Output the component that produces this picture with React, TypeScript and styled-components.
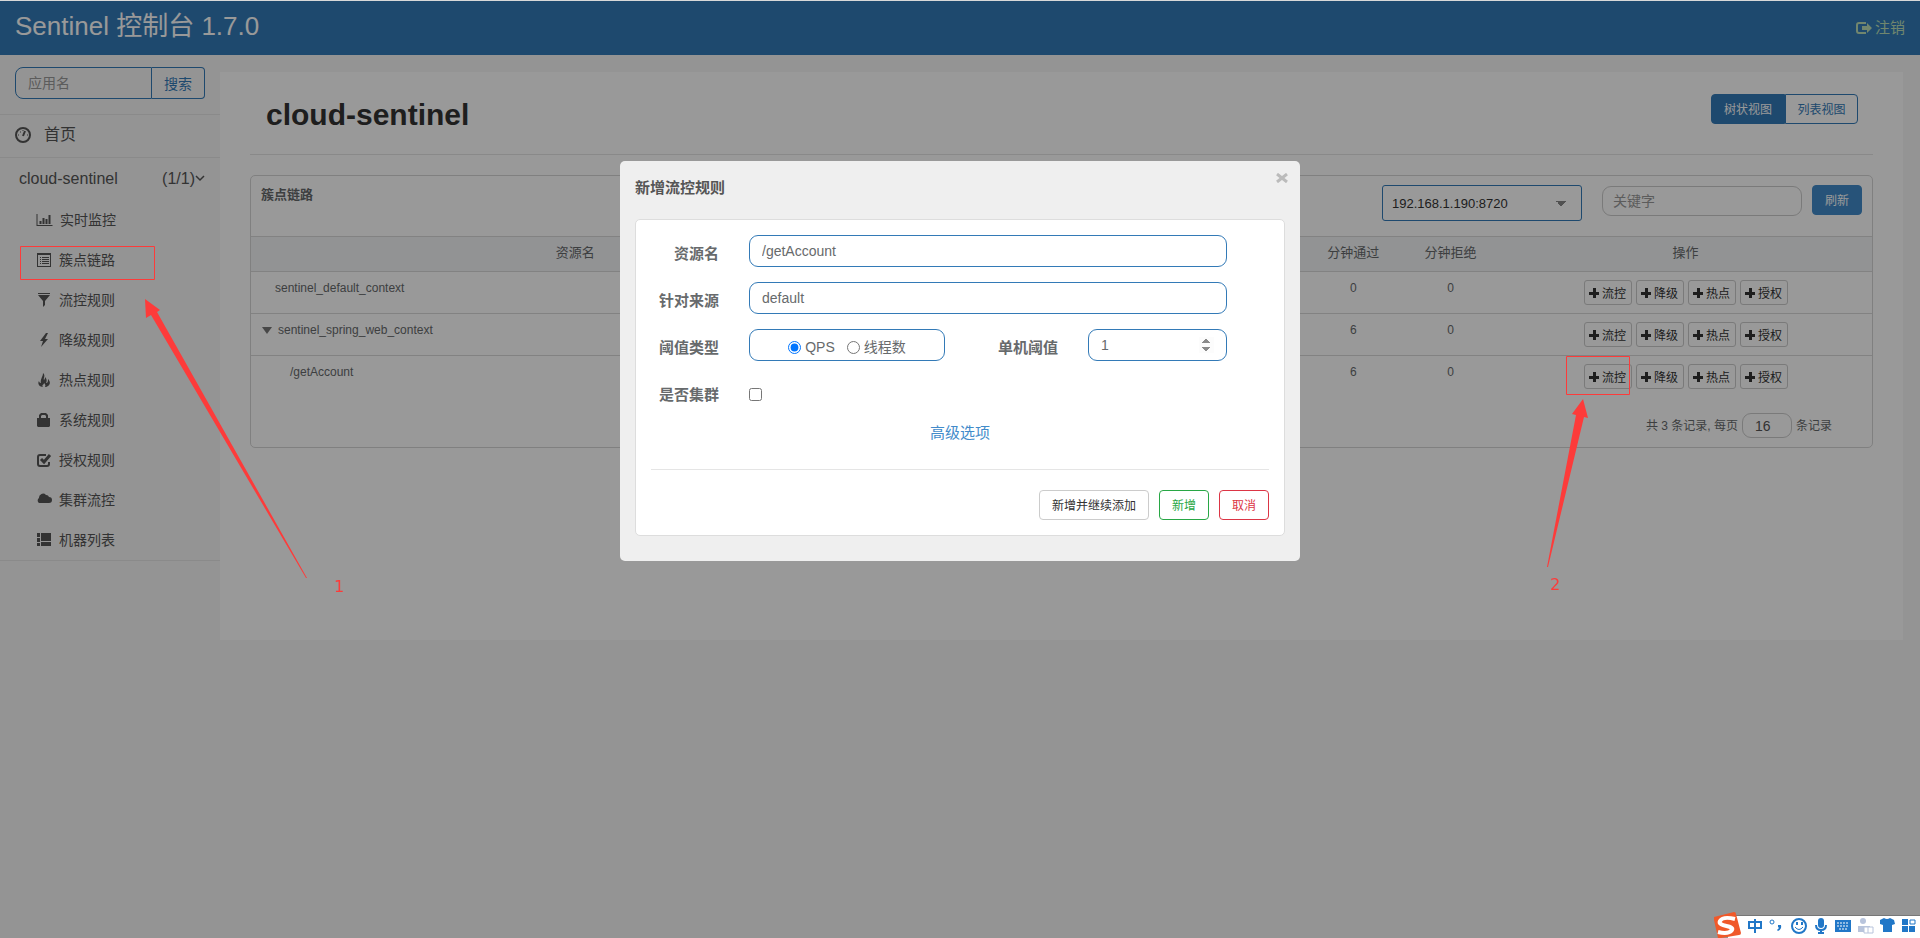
import React from 'react';
import styled, { createGlobalStyle } from 'styled-components';

const sans = `"Liberation Sans", "Noto Sans CJK SC", sans-serif`;

const GlobalStyle = createGlobalStyle`
  *, *::before, *::after { box-sizing: border-box; }
  html, body { height: 100%; }
  body { margin: 0; background: #f7f7f7; color: #676a6c; font: 14px/20px ${sans}; }
  #root { min-height: 100%; }
  button, input, select { font-family: inherit; margin: 0; }
  a { text-decoration: none; }
`;

const Page = styled.div`
  min-height: 100vh;
  border-top: 1px solid #d8d8d8;
`;

const TopBar = styled.header`
  display: flex;
  align-items: center;
  justify-content: space-between;
  height: 54px;
  padding: 0 15px;
  background: #337ab7;
`;

const Brand = styled.a`
  color: #fff;
  font-size: 26px;
  line-height: 50px;
  padding-bottom: 4px;
`;

const Logout = styled.a`
  display: flex;
  align-items: center;
  gap: 3px;
  color: #bce0b8;
  font-size: 15px;
`;

const Body = styled.div`
  display: flex;
  align-items: flex-start;
`;

const Sidebar = styled.nav`
  flex: none;
  width: 220px;
`;

const SideTop = styled.form`
  display: flex;
  height: 59px;
  padding: 12px 15px 15px;
`;

const SearchInput = styled.input`
  flex: 1;
  min-width: 0;
  height: 32px;
  padding: 0 12px;
  border: 1px solid #337ab7;
  border-radius: 8px 0 0 8px;
  background: transparent;
  font-size: 14px;
  &::placeholder { color: #999; }
`;

const SearchButton = styled.button`
  width: 53px;
  height: 32px;
  padding: 0;
  border: 1px solid #337ab7;
  border-left: 0;
  border-radius: 0 4px 4px 0;
  background: transparent;
  color: #337ab7;
  font-size: 14px;
`;

const HomeLink = styled.a`
  display: flex;
  align-items: center;
  gap: 12px;
  height: 43px;
  padding: 0 14px 2px;
  border-top: 1px solid #e7e7e7;
  color: #555;
  font-size: 16px;
`;

const AppLink = styled.a`
  display: flex;
  align-items: center;
  height: 43px;
  padding: 0 15px 0 19px;
  border-top: 1px solid #e7e7e7;
  color: #555;
  font-size: 16px;
  span { flex: 1; }
`;

const SubMenu = styled.ul`
  list-style: none;
  margin: 0;
  padding: 0;
  border-bottom: 1px solid #e7e7e7;
`;

const SubLink = styled.a`
  display: flex;
  align-items: center;
  gap: 6px;
  height: 40px;
  padding-left: 36px;
  color: #555;
  font-size: 14px;
  svg { flex: none; }
`;

const Content = styled.main`
  flex: 1;
  min-width: 0;
  min-height: 568px;
  margin: 17px 17px 0 0;
  padding: 0 30px;
  background: #fff;
`;

const TitleRow = styled.div`
  display: flex;
  justify-content: space-between;
  align-items: flex-start;
  height: 83px;
  padding: 22px 15px 0 16px;
  border-bottom: 1px solid #e4e4e4;
`;

const Title = styled.h1`
  margin: 0;
  color: #333;
  font-size: 30px;
  line-height: 42px;
`;

const ViewSwitch = styled.div`
  display: flex;
`;

const ViewButton = styled.button<{ $active?: boolean }>`
  width: ${p => (p.$active ? 74 : 73)}px;
  height: 30px;
  padding: 0 0 2px;
  border: 1px solid #337ab7;
  border-radius: ${p => (p.$active ? '4px 0 0 4px' : '0 4px 4px 0')};
  background: ${p => (p.$active ? '#337ab7' : '#fff')};
  color: ${p => (p.$active ? '#fff' : '#337ab7')};
  font-size: 12px;
`;

const Card = styled.section`
  margin-top: 20px;
  border: 1px solid #d6d6d6;
  border-radius: 5px;
`;

const CardHead = styled.div`
  display: flex;
  height: 60px;
  padding: 9px 10px 0;
`;

const CardTitle = styled.strong`
  flex: 1;
  color: #676a6c;
  font-size: 13px;
  line-height: 20px;
`;

const MachineSelect = styled.select`
  appearance: none;
  width: 200px;
  height: 36px;
  padding: 0 9px;
  border: 1px solid #337ab7;
  border-radius: 3px;
  color: #333;
  font-size: 13px;
  background: linear-gradient(to bottom left, #888 50%, transparent 50%) 173px 15px / 5px 5px no-repeat,
    linear-gradient(to bottom right, #888 50%, transparent 50%) 178px 15px / 5px 5px no-repeat, #fff;
`;

const KeyInput = styled.input`
  width: 200px;
  height: 30px;
  margin: 1px 10px 0 20px;
  padding: 0 10px;
  border: 1px solid #ccc;
  border-radius: 9px;
  font-size: 14px;
  &::placeholder { color: #999; }
`;

const Refresh = styled.button`
  width: 50px;
  height: 30px;
  padding: 0 0 2px;
  border: 1px solid #428bca;
  border-radius: 4px;
  background: #428bca;
  color: #fff;
  font-size: 12px;
`;

const Table = styled.table`
  width: 100%;
  table-layout: fixed;
  border-collapse: collapse;
  font-size: 12px;
  th {
    height: 35px;
    padding: 0 0 2px;
    border-top: 1px solid #d9d9d9;
    background: #f3f5f7;
    font-size: 13px;
    font-weight: 400;
    text-align: center;
  }
  td {
    height: 42px;
    padding: 6px 0 0;
    border-top: 1px solid #d9d9d9;
    text-align: center;
    vertical-align: top;
  }
`;

const NameCell = styled.td<{ $indent: number }>`
  && { text-align: left; padding-left: ${p => p.$indent}px; }
`;

const Caret = styled.span`
  display: inline-block;
  margin: 0 6px 0 -16px;
  border: 5px solid transparent;
  border-top: 7px solid #777;
  border-bottom: 0;
`;

const Actions = styled.div`
  display: flex;
  justify-content: center;
  gap: 4px;
  padding-top: 2px;
`;

const ActionButton = styled.button`
  display: flex;
  align-items: center;
  justify-content: center;
  gap: 3px;
  width: 48px;
  height: 25px;
  padding: 0;
  border: 1px solid #ccc;
  border-radius: 3px;
  background: #fff;
  color: #333;
  font-size: 12px;
`;

const Pager = styled.div`
  display: flex;
  align-items: center;
  justify-content: flex-end;
  gap: 4px;
  height: 49px;
  padding: 15px 40px 8px 0;
  font-size: 12px;
`;

const PageSize = styled.input`
  width: 50px;
  height: 25px;
  padding: 0 12px;
  border: 1px solid #ccc;
  border-radius: 9px;
  color: #555;
  font-size: 14px;
`;

const Backdrop = styled.div`
  position: fixed;
  inset: 1px 0 0;
  display: flex;
  align-items: flex-start;
  justify-content: center;
  padding-top: 160px;
  background: rgba(0, 0, 0, 0.4);
`;

const Dialog = styled.div`
  position: relative;
  width: 680px;
  padding: 16px 15px 25px;
  border-radius: 5px;
  background: #efefef;
`;

const DialogTitle = styled.h2`
  margin: 0 0 20px;
  color: #555;
  font-size: 15px;
  line-height: 22px;
`;

const Close = styled.button`
  position: absolute;
  top: 8px;
  right: 8px;
  display: flex;
  padding: 4px;
  border: 0;
  background: transparent;
`;

const Panel = styled.form`
  padding: 15px;
  border: 1px solid #ddd;
  border-radius: 5px;
  background: #fff;
`;

const Row = styled.div`
  display: flex;
  align-items: center;
  height: 32px;
  margin-bottom: 15px;
`;

const Label = styled.label<{ $wide?: boolean }>`
  width: ${p => (p.$wide ? 113 : 68)}px;
  margin-right: 30px;
  padding-top: 6px;
  color: #676a6c;
  font-size: 15px;
  font-weight: 700;
  text-align: right;
`;

const Field = styled.input<{ $narrow?: boolean }>`
  width: ${p => (p.$narrow ? 139 : 478)}px;
  height: 32px;
  padding: 0 12px;
  border: 1px solid #337ab7;
  border-radius: 9px;
  background: #fff;
  color: #676a6c;
  font-size: 14px;
  &::-webkit-inner-spin-button { opacity: 1; }
`;

const RadioBox = styled.div`
  display: flex;
  align-items: center;
  justify-content: center;
  gap: 12px;
  width: 196px;
  height: 32px;
  border: 1px solid #337ab7;
  border-radius: 9px;
  font-size: 14px;
  label { display: flex; align-items: center; gap: 4px; padding-top: 4px; }
  input { width: 13px; height: 13px; }
`;

const ClusterCheck = styled.input`
  && { width: 13px; height: 13px; margin-top: 4px; }
`;

const More = styled.div`
  padding-bottom: 26px;
  border-bottom: 1px solid #e5e5e5;
  text-align: center;
  a { color: #428bca; font-size: 15px; }
`;

const Footer = styled.div`
  display: flex;
  justify-content: flex-end;
  gap: 10px;
  padding-top: 20px;
`;

const FootButton = styled.button<{ $tone?: string }>`
  height: 30px;
  padding: 0 12px 2px;
  border: 1px solid ${p => p.$tone || '#ccc'};
  border-radius: 4px;
  background: #fff;
  color: ${p => p.$tone || '#333'};
  font-size: 12px;
`;

const Marks = styled.svg`
  position: fixed;
  top: 0;
  left: 0;
  pointer-events: none;
`;

const RightMarks = styled(Marks)`
  left: auto;
  right: 0;
`;

const ImeBar = styled.div`
  position: fixed;
  right: 0;
  bottom: 0;
  display: flex;
  svg { display: block; }
`;

const icons: Record<string, React.ReactNode> = {
  chart: <path d="M1 2v11h15v1H0V2zM3 9h2v3H3zM6 6h2v6H6zM9 7h2v5H9zM12 3h2v9h-2z" />,
  list: (
    <path fillRule="evenodd" d="M1 1h14v14H1zM2 3v11h12V3zM4 5h1v1H4zM6 5h7v1H6zM4 7h1v1H4zM6 7h7v1H6zM4 9h1v1H4zM6 9h7v1H6zM4 11h1v1H4zM6 11h7v1H6z" />
  ),
  filter: <path d="M2 1h12v1H2zM2 3h12L9 9v4l-2 2V9z" />,
  flash: <path d="M10 1 4 9h3l-2 6 7-8H9l3-6z" />,
  fire: (
    <path d="M7 1c3 3 0 5 1 7 1-1 1-2 1-3 2 2 2 4 1 6 2 0 2-2 2-4 2 2 3 5 0 7-1 1-3 1-3 1 1-2 0-3-1-4 0 2-3 2-1 4-3 0-6-3-4-6 0 1 1 2 2 2C4 7 7 5 7 1z" />
  ),
  lock: <path fillRule="evenodd" d="M1 6h2V3l2-2h5l2 2v3h2v8l-1 1H2l-1-1zM5 6h5V4L9 3H6L5 4z" />,
  check: (
    <>
      <path d="M10 3H4Q2 3 2 5v7q0 2 2 2h7q2 0 2-2v-2" fill="none" stroke="currentColor" strokeWidth="2" />
      <path d="m5 7 3 3 6-7" fill="none" stroke="currentColor" strokeWidth="3" />
    </>
  ),
  cloud: <path d="M3 11a3 3 0 0 1 0-5 4 4 0 0 1 7-3 3 3 0 0 1 3 2 3 3 0 0 1 0 6z" />,
  blocks: <path d="M1 1h3v4H1zM1 6h3v4H1zM1 11h3v3H1zM5 1h10v8H5zM5 10h10v4H5z" />,
};

const Glyph = ({ name }: { name: string }) => (
  <svg width={name === 'chart' ? 18 : 17} height="16" viewBox="0 0 17 16" fill="currentColor" aria-hidden="true">
    {icons[name]}
  </svg>
);

const menu = [
  ['chart', '实时监控'],
  ['list', '簇点链路'],
  ['filter', '流控规则'],
  ['flash', '降级规则'],
  ['fire', '热点规则'],
  ['lock', '系统规则'],
  ['check', '授权规则'],
  ['cloud', '集群流控'],
  ['blocks', '机器列表'],
];

const columns = ['资源名', '通过QPS', '拒绝QPS', '线程数', '平均RT', '分钟通过', '分钟拒绝', '操作'];

const rows = [
  { name: 'sentinel_default_context', indent: 24, pass: 0, open: false },
  { name: 'sentinel_spring_web_context', indent: 27, pass: 6, open: true },
  { name: '/getAccount', indent: 39, pass: 6, open: false },
];

const ImeTools = () => (
  <svg width="208" height="26" viewBox="0 0 208 26" aria-label="输入法">
    <path d="M16 4h192v22H16z" fill="#fff" />
    <path d="M16 3h192v1H16z" fill="#777" />
    <path d="m2 5 20-5q2 0 2 2l5 19q0 2-2 2L9 26H6L2 8z" fill="#f0592a" />
    <path d="M23 7Q11 4 8 9c-3 6 15 4 12 9-3 4-10 3-14 2" fill="none" stroke="#fff" strokeWidth="4" />
    <g transform="translate(0 2)">
      <g fill="none" stroke="#2177c7" strokeWidth="2">
        <path d="M37 8h12v6H37zM43 5v14" />
        <circle cx="60" cy="8" r="2" strokeWidth="1" />
        <circle cx="87" cy="12" r="7" />
        <path d="M83 13q4 5 8 0" strokeWidth="1" />
        <path d="M104 11q0 5 5 5t5-5M109 16v4M106 19h6" />
      </g>
      <g fill="#2177c7">
        <path d="M66 11h3q1 4-3 6l-1-1 2-2-1-1zM84 8h2v3h-2zM89 8h2v3h-2z" />
        <rect x="106" y="4" width="6" height="10" rx="3" />
        <path d="M123 6h16v12h-16z" />
        <path d="m168 6 4-2q3 2 6 0l4 2 1 4-3 1v7h-9v-7l-3-1z" />
        <path d="M190 5h6v6h-6zM190 12h6v6h-6zM197 12h6v6h-6z" />
      </g>
      <path d="M198 6h5v4h-5z" fill="none" stroke="#2177c7" />
      <path d="M125 9h12M125 12h12M127 15h8" stroke="#fff" strokeDasharray="2 1" />
      <g fill="#b8c4dc">
        <circle cx="151" cy="7" r="3" />
        <path d="M146 12h12v6h-12z" />
      </g>
      <path d="M152 13h9v6h-9zM156 13v6" fill="#fff" stroke="#b8c4dc" />
    </g>
  </svg>
);

export default function App() {
  return (
    <Page>
      <GlobalStyle />
      <TopBar>
        <Brand href="#">Sentinel 控制台 1.7.0</Brand>
        <Logout href="#">
          <svg width="17" height="14" viewBox="0 0 17 14" aria-hidden="true">
            <path d="M11 2H4Q2 2 2 4v6q0 2 2 2h7" fill="none" stroke="currentColor" strokeWidth="2" />
            <path d="M7 5h5V2l5 5-5 5V9H7z" fill="currentColor" />
          </svg>
          注销
        </Logout>
      </TopBar>
      <Body>
        <Sidebar>
          <SideTop>
            <SearchInput placeholder="应用名" aria-label="应用名" />
            <SearchButton type="button">搜索</SearchButton>
          </SideTop>
          <HomeLink href="#">
            <svg width="18" height="16" viewBox="0 0 18 16" fill="none" stroke="currentColor" aria-hidden="true">
              <circle cx="9" cy="8" r="7" strokeWidth="2" />
              <path d="M9 9 11 4" strokeWidth="2" />
              <path d="M4 8h1M13 8h1M6 5h1M9 3v1" />
            </svg>
            首页
          </HomeLink>
          <AppLink href="#">
            <span>cloud-sentinel</span>
            (1/1)
            <svg width="10" height="14" viewBox="0 0 10 14" fill="none" stroke="currentColor" strokeWidth="1.500" aria-hidden="true">
              <path d="m1 4 4 4 4-4" />
            </svg>
          </AppLink>
          <SubMenu>
            {menu.map(([icon, text]) => (
              <li key={text}>
                <SubLink href="#">
                  <Glyph name={icon} />
                  {text}
                </SubLink>
              </li>
            ))}
          </SubMenu>
        </Sidebar>
        <Content>
          <TitleRow>
            <Title>cloud-sentinel</Title>
            <ViewSwitch>
              <ViewButton $active>树状视图</ViewButton>
              <ViewButton>列表视图</ViewButton>
            </ViewSwitch>
          </TitleRow>
          <Card>
            <CardHead>
              <CardTitle>簇点链路</CardTitle>
              <MachineSelect aria-label="机器">
                <option>192.168.1.190:8720</option>
              </MachineSelect>
              <KeyInput placeholder="关键字" aria-label="关键字" />
              <Refresh>刷新</Refresh>
            </CardHead>
            <Table>
              <colgroup>
                <col style={{ width: '40%' }} />
                <col span={4} />
                <col style={{ width: '6%' }} />
                <col style={{ width: '6%' }} />
                <col style={{ width: '23%' }} />
              </colgroup>
              <thead>
                <tr>{columns.map(c => <th key={c}>{c}</th>)}</tr>
              </thead>
              <tbody>
                {rows.map(r => (
                  <tr key={r.name}>
                    <NameCell $indent={r.indent}>
                      {r.open && <Caret />}
                      {r.name}
                    </NameCell>
                    <td>0</td>
                    <td>0</td>
                    <td>0</td>
                    <td>0</td>
                    <td>{r.pass}</td>
                    <td>0</td>
                    <td>
                      <Actions>
                        {['流控', '降级', '热点', '授权'].map(a => (
                          <ActionButton key={a}>
                            <svg width="10" height="10" viewBox="0 0 10 10" fill="currentColor" aria-hidden="true">
                              <path d="M4 0h3v4h3v3H7v3H4V7H0V4h4z" />
                            </svg>
                            {a}
                          </ActionButton>
                        ))}
                      </Actions>
                    </td>
                  </tr>
                ))}
              </tbody>
            </Table>
            <Pager>
              <span>共 3 条记录, 每页</span>
              <PageSize defaultValue="16" aria-label="每页条数" />
              <span>条记录</span>
            </Pager>
          </Card>
        </Content>
      </Body>

      <Backdrop>
        <Dialog role="dialog" aria-labelledby="dialog-title">
          <Close aria-label="关闭">
            <svg width="12" height="10" viewBox="0 0 12 10" stroke="#bbb" strokeWidth="3" aria-hidden="true">
              <path d="m1 1 10 8M11 1 1 9" />
            </svg>
          </Close>
          <DialogTitle id="dialog-title">新增流控规则</DialogTitle>
          <Panel>
            <Row>
              <Label htmlFor="resource">资源名</Label>
              <Field id="resource" defaultValue="/getAccount" />
            </Row>
            <Row>
              <Label htmlFor="origin">针对来源</Label>
              <Field id="origin" defaultValue="default" />
            </Row>
            <Row>
              <Label as="span">阈值类型</Label>
              <RadioBox role="radiogroup" aria-label="阈值类型">
                <label><input type="radio" name="grade" defaultChecked />QPS</label>
                <label><input type="radio" name="grade" />线程数</label>
              </RadioBox>
              <Label $wide htmlFor="count">单机阈值</Label>
              <Field $narrow id="count" type="number" defaultValue="1" />
            </Row>
            <Row>
              <Label htmlFor="cluster">是否集群</Label>
              <ClusterCheck id="cluster" type="checkbox" />
            </Row>
            <More><a href="#">高级选项</a></More>
            <Footer>
              <FootButton type="button">新增并继续添加</FootButton>
              <FootButton type="button" $tone="#28a745">新增</FootButton>
              <FootButton type="button" $tone="#dc3545">取消</FootButton>
            </Footer>
          </Panel>
        </Dialog>
      </Backdrop>

      <Marks width="360" height="620" viewBox="0 0 360 620" fill="#fd3b3a">
        <path d="M20.500 246.500h134v33h-134z" fill="none" stroke="#fd3b3a" />
        <path d="m145 299 15 11-3 2 150 266h-1L151 315l-5 3z" />
        <text x="334" y="592" fontFamily="DejaVu Sans, sans-serif" fontSize="16">1</text>
      </Marks>
      <RightMarks width="360" height="620" viewBox="1560 0 360 620" overflow="visible" fill="#fd3b3a">
        <path d="M1566.500 356.500h63v38h-63z" fill="none" stroke="#fd3b3a" />
        <path d="m1583 399 5 19-4-1-36 150h-1l29-152-4-1z" />
        <text x="1550" y="590" fontFamily="DejaVu Sans, sans-serif" fontSize="16">2</text>
      </RightMarks>
      <ImeBar><ImeTools /></ImeBar>
    </Page>
  );
}
